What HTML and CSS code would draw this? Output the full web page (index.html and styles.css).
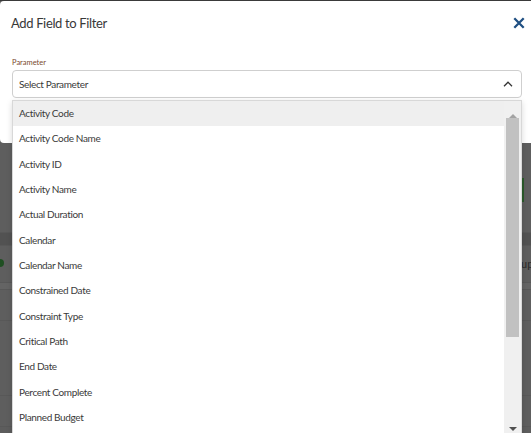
FILE: index.html
```html
<!DOCTYPE html>
<html>
<head>
<meta charset="utf-8">
<link rel="stylesheet" href="styles.css">
</head>
<body>
<div class="page">
  <div class="bg-top"></div>
  <div class="bg-row r1"><span class="green-btn"></span></div>
  <div class="bg-row r2"></div>
  <div class="bg-row r3"><span class="dot green"></span><span class="bg-text right">up</span></div>
  <div class="bg-row r4"></div>
  <div class="bg-row r5"><span class="bg-text left">015</span><span class="dot blue"></span></div>
  <div class="bg-row r6"></div>
  <div class="bg-row r7"></div>
</div>

<div class="modal">
  <div class="modal-header">
    <h1 class="title">Add Field to Filter</h1>
    <button class="close" aria-label="Close">
      <svg width="12" height="12" viewBox="0 0 12 12"><path d="M1.3 1.3 L10.7 10.7 M10.7 1.3 L1.3 10.7" stroke="#1f4f82" stroke-width="2.3" stroke-linecap="butt" fill="none"/></svg>
    </button>
  </div>
  <div class="field">
    <label class="label">Parameter</label>
    <div class="select">
      <span>Select Parameter</span>
      <svg width="10" height="6" viewBox="0 0 10 6"><path d="M1 5.2 L5 1.2 L9 5.2" stroke="#333" stroke-width="1.3" fill="none"/></svg>
    </div>
  </div>
</div>

<div class="dropdown">
  <ul class="options">
    <li class="active">Activity Code</li>
    <li>Activity Code Name</li>
    <li>Activity ID</li>
    <li>Activity Name</li>
    <li>Actual Duration</li>
    <li>Calendar</li>
    <li>Calendar Name</li>
    <li>Constrained Date</li>
    <li>Constraint Type</li>
    <li>Critical Path</li>
    <li>End Date</li>
    <li>Percent Complete</li>
    <li>Planned Budget</li>
  </ul>
  <div class="scrollbar">
    <div class="arrow-up"></div>
    <div class="thumb"></div>
    <div class="track-rest"></div>
    <div class="arrow-down"></div>
  </div>
</div>
</body>
</html>
```

FILE: styles.css
```css
html, body {
  margin: 0;
  padding: 0;
}
body {
  width: 531px;
  height: 433px;
  overflow: hidden;
  background: #5d5d5d;
  font-family: "Segoe UI", "Lato", "Noto Sans", sans-serif;
  position: relative;
}

/* dimmed background page */
.page {
  display: flex;
  flex-direction: column;
  border-top: 1px solid #3a3a3a;
}
.bg-top { height: 143px; background: #5e5e5e; }
.bg-row { position: relative; background: #5e5e5e; border-bottom: 1px solid #585858; }
.r1 { height: 88px; }
.r2 { height: 12px; background: #525252; }
.r3 { height: 36px; }
.r4 { height: 6px; background: #646464; }
.r5 { height: 30px; }
.r6 { height: 74px; }
.r7 { height: 30px; }

.green-btn {
  position: absolute;
  right: 7px;
  top: 34px;
  width: 3px;
  height: 24px;
  background: #2b5b2b;
  border-left: 1px solid #3e6e3e;
}
.dot {
  position: absolute;
  width: 8px;
  height: 8px;
  border-radius: 50%;
}
.dot.green { left: -4px; top: 13px; background: #1f4f22; }
.dot.blue { right: 3px; top: 48px; background: #17324f; }
.bg-text {
  position: absolute;
  font-size: 11px;
  color: #2a2a2a;
}
.bg-text.right { left: 521px; top: 11px; }
.bg-text.left { left: -6px; top: 45px; }

/* modal */
.modal {
  position: absolute;
  left: 0;
  top: 1px;
  width: 535px;
  height: 142px;
  background: #fff;
  border-radius: 4px;
}
.modal-header {
  display: flex;
  align-items: center;
  justify-content: space-between;
  padding: 13px 10px 0 11px;
  height: 18px;
}
.title {
  margin: 0;
  font-size: 13px;
  font-weight: 400;
  letter-spacing: -0.35px;
  color: #383838;
  line-height: 18px;
}
.close {
  border: 0;
  background: none;
  padding: 0;
  margin: 0;
  width: 12px;
  height: 12px;
  display: flex;
}
.field {
  padding: 26px 9px 0 12px;
}
.label {
  display: block;
  font-size: 7.5px;
  color: #7a4a2e;
  line-height: 10px;
  height: 12px;
}
.select {
  box-sizing: border-box;
  height: 28px;
  width: 510px;
  border: 1px solid #cfcfcf;
  border-radius: 4px;
  display: flex;
  align-items: center;
  justify-content: space-between;
  padding: 0 8px 0 6px;
  font-size: 10px;
  letter-spacing: -0.35px;
  color: #3a3a3a;
}

/* dropdown */
.dropdown {
  position: absolute;
  left: 12px;
  top: 100px;
  width: 510px;
  height: 345px;
  box-sizing: border-box;
  background: #fff;
  border: 1px solid #d8d8d8;
  display: flex;
  box-shadow: 0 2px 6px rgba(0,0,0,0.15);
}
.options {
  list-style: none;
  margin: 0;
  padding: 0;
  flex: 1;
}
.options li {
  height: 25.33px;
  line-height: 25.33px;
  padding-left: 6px;
  font-size: 10px;
  letter-spacing: -0.35px;
  color: #3a3a3a;
}
.options li.active { background: #efefef; }

.scrollbar {
  width: 17px;
  background: #f0f0f0;
  display: flex;
  flex-direction: column;
  align-items: center;
}
.arrow-up {
  height: 17px;
  width: 0;
  box-sizing: border-box;
  border-left: 4px solid transparent;
  border-right: 4px solid transparent;
  border-bottom: 4px solid #a3a3a3;
  border-top: 5px solid transparent;
}
.thumb {
  width: 13px;
  height: 219px;
  background: #c1c1c1;
}
.track-rest { flex: 1; }
.arrow-down {
  width: 0;
  height: 17px;
  box-sizing: border-box;
  border-left: 4px solid transparent;
  border-right: 4px solid transparent;
  border-top: 4px solid #505050;
  border-bottom: 0;
}
```
